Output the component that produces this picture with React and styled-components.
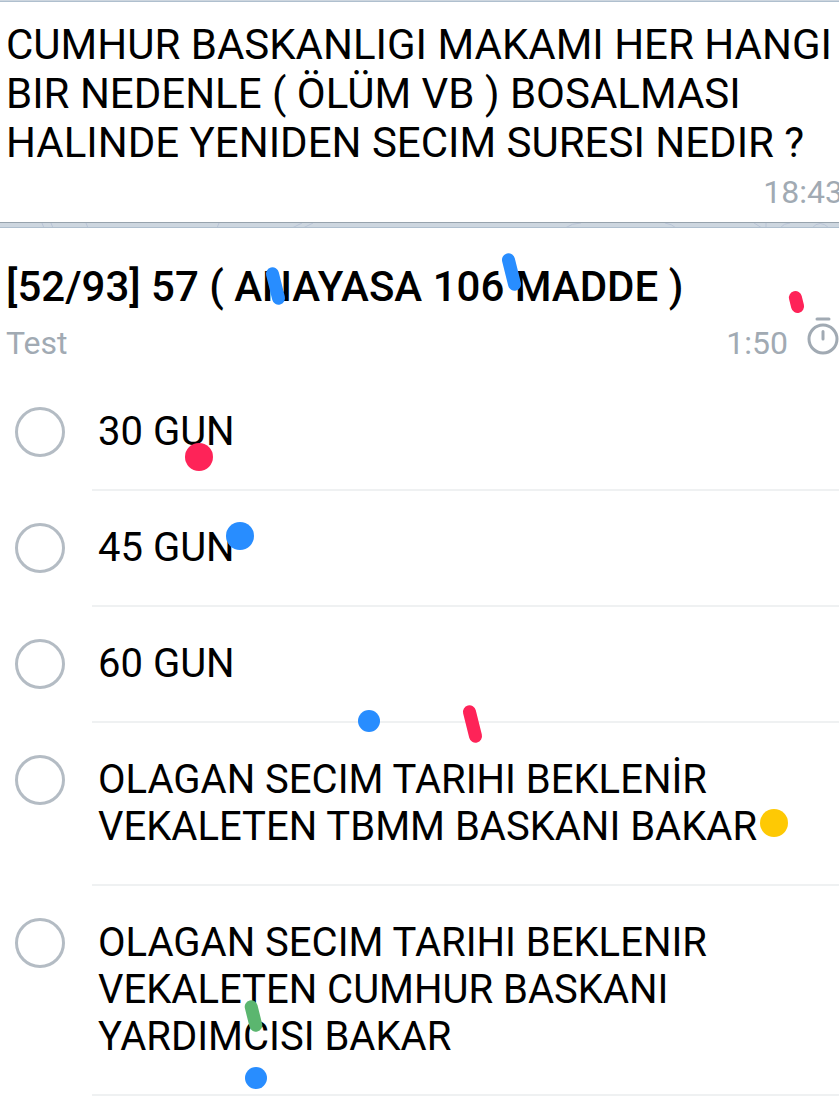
import React from "react";
import styled, { createGlobalStyle } from "styled-components";

const GlobalStyle = createGlobalStyle`
  * {
    box-sizing: border-box;
  }
  body {
    margin: 0;
    background: #ffffff;
    color: #000000;
    font-family: Roboto, "Liberation Sans", sans-serif;
  }
`;

const Chat = styled.main`
  position: relative;
  overflow: hidden;
`;

const Wallpaper = styled.div`
  height: ${(props) => props.$height}px;
  overflow: hidden;
  background: #cdd6df;
  border-top: ${(props) => (props.$shadow ? "1px solid #97a3ad" : "none")};
  border-bottom: 1px solid #afbfce;
  & svg {
    display: block;
  }
`;

const Bubble = styled.section`
  background: #ffffff;
  padding: 18px 0 11px 6px;
`;

const Message = styled.p`
  margin: 0;
  font-size: 42px;
  line-height: 49px;
`;

const Time = styled.time`
  display: block;
  margin: 6px -4px 0 0;
  text-align: right;
  font-size: 32px;
  line-height: 38px;
  color: #a1aab3;
`;

const Poll = styled.form`
  background: #ffffff;
  padding-top: 34px;
`;

const Question = styled.h1`
  margin: 0;
  padding-left: 6px;
  font-size: 42px;
  line-height: 49px;
  font-weight: 500;
`;

const Meta = styled.div`
  display: flex;
  justify-content: space-between;
  margin: 13px 0;
  padding-left: 6px;
  font-size: 32px;
  line-height: 38px;
  color: #a1aab3;
`;

const Countdown = styled.span`
  display: flex;
  gap: 18px;
`;

const Options = styled.fieldset`
  margin: 0;
  padding: 0;
  border: none;
`;

const Option = styled.label`
  display: grid;
  grid-template-columns: 77px 1fr;
  padding-left: 15px;
  cursor: pointer;
`;

const Radio = styled.input`
  appearance: none;
  width: 50px;
  height: 50px;
  margin: 32px 0 0;
  border: 3px solid #b4bcc4;
  border-radius: 50%;
  background: transparent;
  &:checked {
    border-width: 14px;
    border-color: #288dff;
  }
`;

const OptionText = styled.span`
  padding: 33px 60px 34px 6px;
  border-bottom: 2px solid #eff1f2;
  font-size: 40px;
  line-height: 47px;
`;

const colors = {
  red: "#fe2358",
  blue: "#288dff",
  yellow: "#fec904",
  green: "#5bb66f",
};

const Confetti = styled.div`
  position: absolute;
  inset: 0;
  pointer-events: none;
`;

const Piece = styled.span`
  position: absolute;
  left: ${(props) => props.$x}px;
  top: ${(props) => props.$y}px;
  width: ${(props) => props.$w}px;
  height: ${(props) => props.$h}px;
  border-radius: 14px;
  background: ${(props) => colors[props.$color]};
  transform: rotate(${(props) => (props.$w === props.$h ? 0 : -14)}deg);
`;

const options = [
  "30 GUN",
  "45 GUN",
  "60 GUN",
  "OLAGAN SECIM TARIHI BEKLENİR VEKALETEN TBMM BASKANI BAKAR",
  "OLAGAN SECIM TARIHI BEKLENIR VEKALETEN CUMHUR BASKANI YARDIMCISI BAKAR",
];

const pieces = [
  { color: "blue", x: 269, y: 267, w: 13, h: 38 },
  { color: "blue", x: 505, y: 253, w: 13, h: 38 },
  { color: "red", x: 790, y: 291, w: 13, h: 22 },
  { color: "red", x: 185, y: 443, w: 28, h: 28 },
  { color: "blue", x: 226, y: 522, w: 28, h: 28 },
  { color: "blue", x: 358, y: 710, w: 22, h: 22 },
  { color: "red", x: 466, y: 705, w: 13, h: 38 },
  { color: "yellow", x: 760, y: 809, w: 28, h: 28 },
  { color: "green", x: 247, y: 1000, w: 13, h: 32 },
  { color: "blue", x: 245, y: 1067, w: 22, h: 22 },
];

function Doodles() {
  return (
    <svg width="839" height="5" fill="none" stroke="#b9c4d6" aria-hidden="true">
      <path d="M42 0l2 5M51 0l2 5M86 0l2 5M219 0l-2 5M302 0l-10 5M313 0l-10 5" />
      <path d="M565 5q7-5 16-5M665 0q7 1 11 5M754 0l8 5M766 0v5M780 5q4-5 10-5M812 5q8-9 17 0" />
    </svg>
  );
}

function Stopwatch() {
  return (
    <svg
      width="33"
      height="38"
      viewBox="0 0 33 38"
      fill="none"
      stroke="#a1aab3"
      strokeWidth="3"
      strokeLinecap="round"
      aria-hidden="true"
    >
      <circle cx="17" cy="15" r="14" />
      <path d="M17 7.500v7.500M11-5h12" />
    </svg>
  );
}

const Watch = styled.span`
  & svg {
    display: block;
    overflow: visible;
  }
`;

export default function App() {
  return (
    <Chat>
      <GlobalStyle />
      <Wallpaper $height={2} />
      <Bubble>
        <Message>
          CUMHUR BASKANLIGI MAKAMI HER HANGI BIR NEDENLE ( ÖLÜM VB ) BOSALMASI
          HALINDE YENIDEN SECIM SURESI NEDIR ?
        </Message>
        <Time>18:43</Time>
      </Bubble>
      <Wallpaper $height={6} $shadow>
        <Doodles />
      </Wallpaper>
      <Poll>
        <Question>[52/93] 57 ( ANAYASA 106 MADDE )</Question>
        <Meta>
          <span>Test</span>
          <Countdown>
            1:50
            <Watch>
              <Stopwatch />
            </Watch>
          </Countdown>
        </Meta>
        <Options aria-label="Test">
          {options.map((text, index) => (
            <Option key={`option-${index}`}>
              <Radio type="radio" name="answer" value={index} />
              <OptionText>{text}</OptionText>
            </Option>
          ))}
        </Options>
      </Poll>
      <Confetti>
        {pieces.map(({ color, x, y, w, h }, index) => (
          <Piece
            key={`piece-${index}`}
            $color={color}
            $x={x}
            $y={y}
            $w={w}
            $h={h}
          />
        ))}
      </Confetti>
    </Chat>
  );
}
